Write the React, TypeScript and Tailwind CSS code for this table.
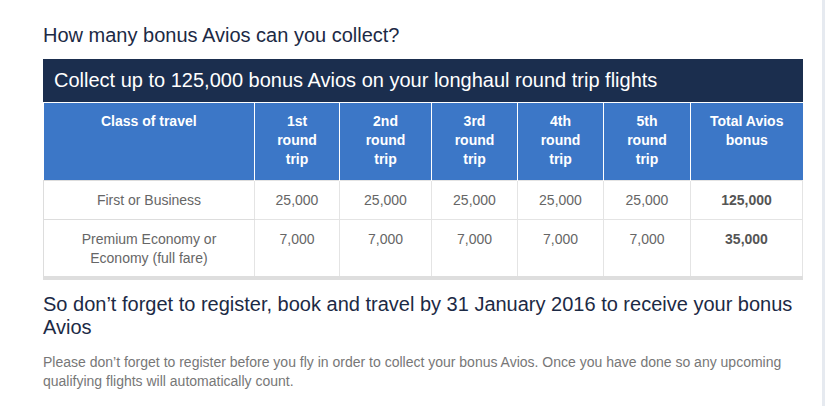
import React from "react";

const COLS = [
  { label: ["Class of travel"], w: "w-[211px]" },
  { label: ["1st", "round", "trip"], w: "w-[85px]" },
  { label: ["2nd", "round", "trip"], w: "w-[92px]" },
  { label: ["3rd", "round", "trip"], w: "w-[86px]" },
  { label: ["4th", "round", "trip"], w: "w-[86px]" },
  { label: ["5th", "round", "trip"], w: "w-[87px]" },
  { label: ["Total Avios", "bonus"], w: "w-[112px]" },
];

const ROWS = [
  { name: ["First or Business"], per: "25,000", total: "125,000", h: "h-[39px]" },
  { name: ["Premium Economy or", "Economy (full fare)"], per: "7,000", total: "35,000", h: "h-[59px]" },
];

export default function App() {
  return (
    <div className="w-[825px] h-[406px] bg-white flex font-['Liberation_Sans',Arial,sans-serif]">
      <div className="flex-1 pl-[43px] pr-[19px] pt-[23px]">
        <h2 className="text-[20px] leading-[24px] text-[#1c2a45]">How many bonus Avios can you collect?</h2>

        <div className="mt-[12px] w-[760px] h-[43px] bg-[#1b2e4e] text-white text-[20px] leading-[43px] pl-[11px]">
          Collect up to 125,000 bonus Avios on your longhaul round trip flights
        </div>

        <table className="mt-[1px] w-[760px] border-collapse table-fixed border-b-4 border-b-[#dedede]">
          <thead>
            <tr className="bg-[#3c77c7] text-white">
              {COLS.map((c, i) => (
                <th
                  key={i}
                  className={`${c.w} h-[77px] align-top pt-[9px] text-[14px] leading-[19px] font-bold text-center border-x border-white first:border-l-0 last:border-r-0`}
                >
                  {c.label.map((l) => (
                    <div key={l}>{l}</div>
                  ))}
                </th>
              ))}
            </tr>
          </thead>
          <tbody>
            {ROWS.map((r) => (
              <tr key={r.total} className={`${r.h} text-[14px] leading-[19px] text-[#666]`}>
                <td className="align-top pt-[10px] text-center border border-[#dddddd] border-r-[#e4e4e4]">
                  {r.name.map((l) => (
                    <div key={l}>{l}</div>
                  ))}
                </td>
                {[0, 1, 2, 3, 4].map((i) => (
                  <td key={i} className="align-top pt-[10px] text-center border border-[#e4e4e4]">
                    {r.per}
                  </td>
                ))}
                <td className="align-top pt-[10px] text-center font-bold text-[#555] border border-[#e4e4e4]">
                  {r.total}
                </td>
              </tr>
            ))}
          </tbody>
        </table>

        <h2 className="mt-[13px] text-[20px] leading-[23px] text-[#1c2a45]">
          So don’t forget to register, book and travel by 31 January 2016 to receive your bonus Avios
        </h2>

        <p className="mt-[14px] text-[14px] leading-[19px] text-[#777]">
          Please don’t forget to register before you fly in order to collect your bonus Avios. Once you have done so any upcoming
          qualifying flights will automatically count.
        </p>
      </div>
      <div className="w-[3px] bg-[#e6eaf0]" />
    </div>
  );
}
